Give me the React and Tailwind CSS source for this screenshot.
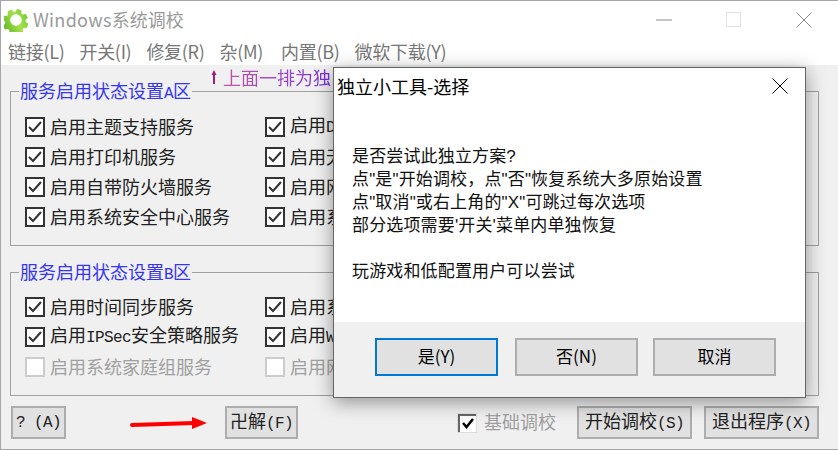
const cjk = "font-['Noto_Sans_CJK_SC','Noto_Sans',sans-serif]";

function Lat({ children }) {
  return <span className="font-['Liberation_Mono',monospace] text-[16px] tracking-[-0.6px]">{children}</span>;
}

function Check({ label, disabled }) {
  return (
    <div className={`flex h-5 items-center gap-[5px] text-[18px] leading-5 whitespace-nowrap ${disabled ? 'text-[#a0a0a0]' : 'text-[#222]'}`}>
      <span className={`flex h-5 w-5 shrink-0 items-center justify-center border-2 bg-white ${disabled ? 'border-[#cccccc]' : 'border-[#333]'}`}>
        {!disabled && (
          <svg width="14" height="12" viewBox="0 0 14 12" fill="none">
            <path d="M1 6l4 4 8-9" stroke="#333" strokeWidth="2" />
          </svg>
        )}
      </span>
      <span className="-translate-y-px">{label}</span>
    </div>
  );
}

function Group({ title, rows, className }) {
  return (
    <div className={`relative border border-[#a0a0a0] pl-[14px] ${className}`}>
      <div className="absolute left-2 top-[-12px] h-5 whitespace-nowrap bg-[#f0f0f0] px-[1px] text-[18px] leading-5 text-[#3636f2]">
        {title}
      </div>
      <div className="grid grid-cols-[240px_1fr] gap-y-[10px]">
        {rows.map((r, i) => <div key={i} className="contents">
          <Check label={r[0]} disabled={r[2]} />
          <Check label={r[1]} disabled={r[2]} />
        </div>)}
      </div>
    </div>
  );
}

function Btn({ children, className }) {
  return (
    <div className={`flex h-[33px] items-center justify-center border-2 border-[#adadad] bg-[#e1e1e1] text-[18px] text-[#222] whitespace-nowrap ${className}`}>
      {children}
    </div>
  );
}

function DlgBtn({ children, primary }) {
  return (
    <div className={`flex h-[38px] w-[123px] items-center justify-center bg-[#e1e1e1] text-[17px] text-black ${primary ? 'border-2 border-[#0078d7]' : 'border-2 border-[#adadad]'}`}>
      <span className="-translate-y-px">{children}</span>
    </div>
  );
}

function Gear() {
  return (
    <svg width="24" height="24" viewBox="0 0 24 24">
      <defs>
        <linearGradient id="g" x1="0" y1="1" x2="1" y2="0">
          <stop offset="0" stopColor="#4fb01c" />
          <stop offset="0.55" stopColor="#a5e04c" />
          <stop offset="1" stopColor="#6cc52d" />
        </linearGradient>
      </defs>
      <g transform="rotate(18 12 12)">
        <path
          fillRule="evenodd"
          fill="url(#g)"
          stroke="url(#g)"
          strokeWidth="1"
          strokeLinejoin="round"
          d="M10 1h4l.7 3 2.5 1 2.6-1.6 2.8 2.8-1.6 2.6 1 2.5 3 .7v4l-3 .7-1 2.5 1.6 2.6-2.8 2.8-2.6-1.6-2.5 1-.7 3h-4l-.7-3-2.5-1-2.6 1.6-2.8-2.8 1.6-2.6-1-2.5-3-.7v-4l3-.7 1-2.5-1.6-2.6 2.8-2.8 2.6 1.6 2.5-1zM12 5.5a6.5 6.5 0 1 0 0 13 6.5 6.5 0 0 0 0-13z"
          transform="translate(0.6 0.6) scale(0.95)"
        />
      </g>
    </svg>
  );
}

export default function App() {
  return (
    <div className={`relative flex h-[450px] w-[838px] flex-col overflow-hidden border border-r-0 border-[#a6a6a6] bg-white ${cjk}`}>
      <div className="flex h-[37px] shrink-0 items-center pl-[3px]">
        <Gear />
        <span className="ml-[5px] text-[18px] text-[#9a9a9a]"><span className="tracking-[0.3px]">Windows</span>系统调校</span>
        <div className="ml-auto flex items-center">
          <svg width="16" height="2" className="mr-[54px]"><path d="M0 1h16" stroke="#8a8a8a" /></svg>
          <span className="mr-[55px] h-[15px] w-[15px] border border-[#e2e2e2]" />
          <svg width="16" height="16" className="mr-[26px]" viewBox="0 0 16 16"><path d="M.5.5l15 15M15.5.5l-15 15" stroke="#8a8a8a" /></svg>
        </div>
      </div>

      <div className="flex h-[27px] shrink-0 items-center gap-[15px] pl-[7px] text-[18px] tracking-[-0.3px] text-[#777]">
        <span>链接(L)</span>
        <span>开关(I)</span>
        <span>修复(R)</span>
        <span className="mr-[3px]">杂(M)</span>
        <span>内置(B)</span>
        <span>微软下载(Y)</span>
      </div>

      <div className="flex min-h-0 flex-1 flex-col bg-[#f0f0f0] pl-[9px] pr-[19px]">
        <div className="flex h-[26px] shrink-0 -translate-y-px items-center pl-[199px] text-[18px] leading-[26px] whitespace-nowrap">
          <svg width="14" height="14" viewBox="0 0 14 14" className="shrink-0">
            <path d="M5 0L7.5 5H6V14H4V5H2.5z" fill="#9b1e7f" />
          </svg>
          <span className="bg-gradient-to-r from-[#c2539f] to-[#7a2ae0] bg-clip-text text-transparent">上面一排为独</span>
        </div>

        <Group
          title={<>服务启用状态设置<Lat>A</Lat>区</>}
          className="h-[155px] pt-[25px]"
          rows={[
            ['启用主题支持服务', <>启用<Lat>D</Lat></>],
            ['启用打印机服务', '启用无'],
            ['启用自带防火墙服务', '启用网'],
            ['启用系统安全中心服务', '启用系'],
          ]}
        />

        <Group
          title={<>服务启用状态设置<Lat>B</Lat>区</>}
          className="mt-[26px] h-[124px] pt-[24px]"
          rows={[
            ['启用时间同步服务', '启用系'],
            [<>启用<Lat>IPSec</Lat>安全策略服务</>, <>启用<Lat>W</Lat></>],
            ['启用系统家庭组服务', '启用网', true],
          ]}
        />

        <div className="mt-[10px] flex items-center">
          <Btn className="w-[55px] ml-[1px]"><Lat>? (A)</Lat></Btn>
          <svg width="80" height="14" viewBox="0 0 80 14" className="ml-[63px] shrink-0">
            <path d="M3 9L65 7" stroke="#ff0000" strokeWidth="4" strokeLinecap="round" />
            <path d="M63 1L78 7L63 13z" fill="#ff0000" />
          </svg>
          <Btn className="ml-[16px] w-[73px]"><span className="-translate-y-px">卍解<Lat>(F)</Lat></span></Btn>
          <span className="ml-[160px] flex h-[18px] w-[18px] items-center justify-center border-t-2 border-l-2 border-[#666] bg-white outline outline-1 outline-[#ddd]">
            <svg width="12" height="11" viewBox="0 0 12 11"><path d="M1 5l3.5 4L11 1" fill="none" stroke="#000" strokeWidth="2.5" /></svg>
          </span>
          <span className="ml-[8px] -translate-y-px text-[18px] text-[#a0a0a0]">基础调校</span>
          <Btn className="ml-[21px] w-[115px]"><span className="-translate-y-px">开始调校<Lat>(S)</Lat></span></Btn>
          <Btn className="ml-[12px] w-[115px]"><span className="-translate-y-px">退出程序<Lat>(X)</Lat></span></Btn>
        </div>
      </div>

      <div className="absolute left-[332px] top-[66px] flex h-[331px] w-[473px] flex-col border border-[#666] bg-white shadow-[0_4px_18px_rgba(0,0,0,0.4)]">
        <div className="flex h-[36px] shrink-0 items-center justify-between pl-[3px] pr-[17px] text-[18px] text-black">
          <span>独立小工具-选择</span>
          <svg width="16" height="16" viewBox="0 0 16 16"><path d="M.5.5l15 15M15.5.5l-15 15" stroke="#000" /></svg>
        </div>
        <div className="flex-1 pl-[18px] pt-[41px] font-['Liberation_Sans','Noto_Sans_CJK_SC',sans-serif] text-[17px] leading-[23px] tracking-[0.15px] text-[#111]">
          <p>是否尝试此独立方案?</p>
          <p>点"是"开始调校，点"否"恢复系统大多原始设置</p>
          <p>点"取消"或右上角的"X"可跳过每次选项</p>
          <p>部分选项需要'开关'菜单内单独恢复</p>
          <p className="mt-[23px]">玩游戏和低配置用户可以尝试</p>
        </div>
        <div className="flex h-[75px] shrink-0 gap-[17px] bg-[#f0f0f0] pl-[41px] pt-[16px]">
          <DlgBtn primary>是(Y)</DlgBtn>
          <DlgBtn>否(N)</DlgBtn>
          <div className="-ml-[2px]"><DlgBtn>取消</DlgBtn></div>
        </div>
      </div>
    </div>
  );
}
